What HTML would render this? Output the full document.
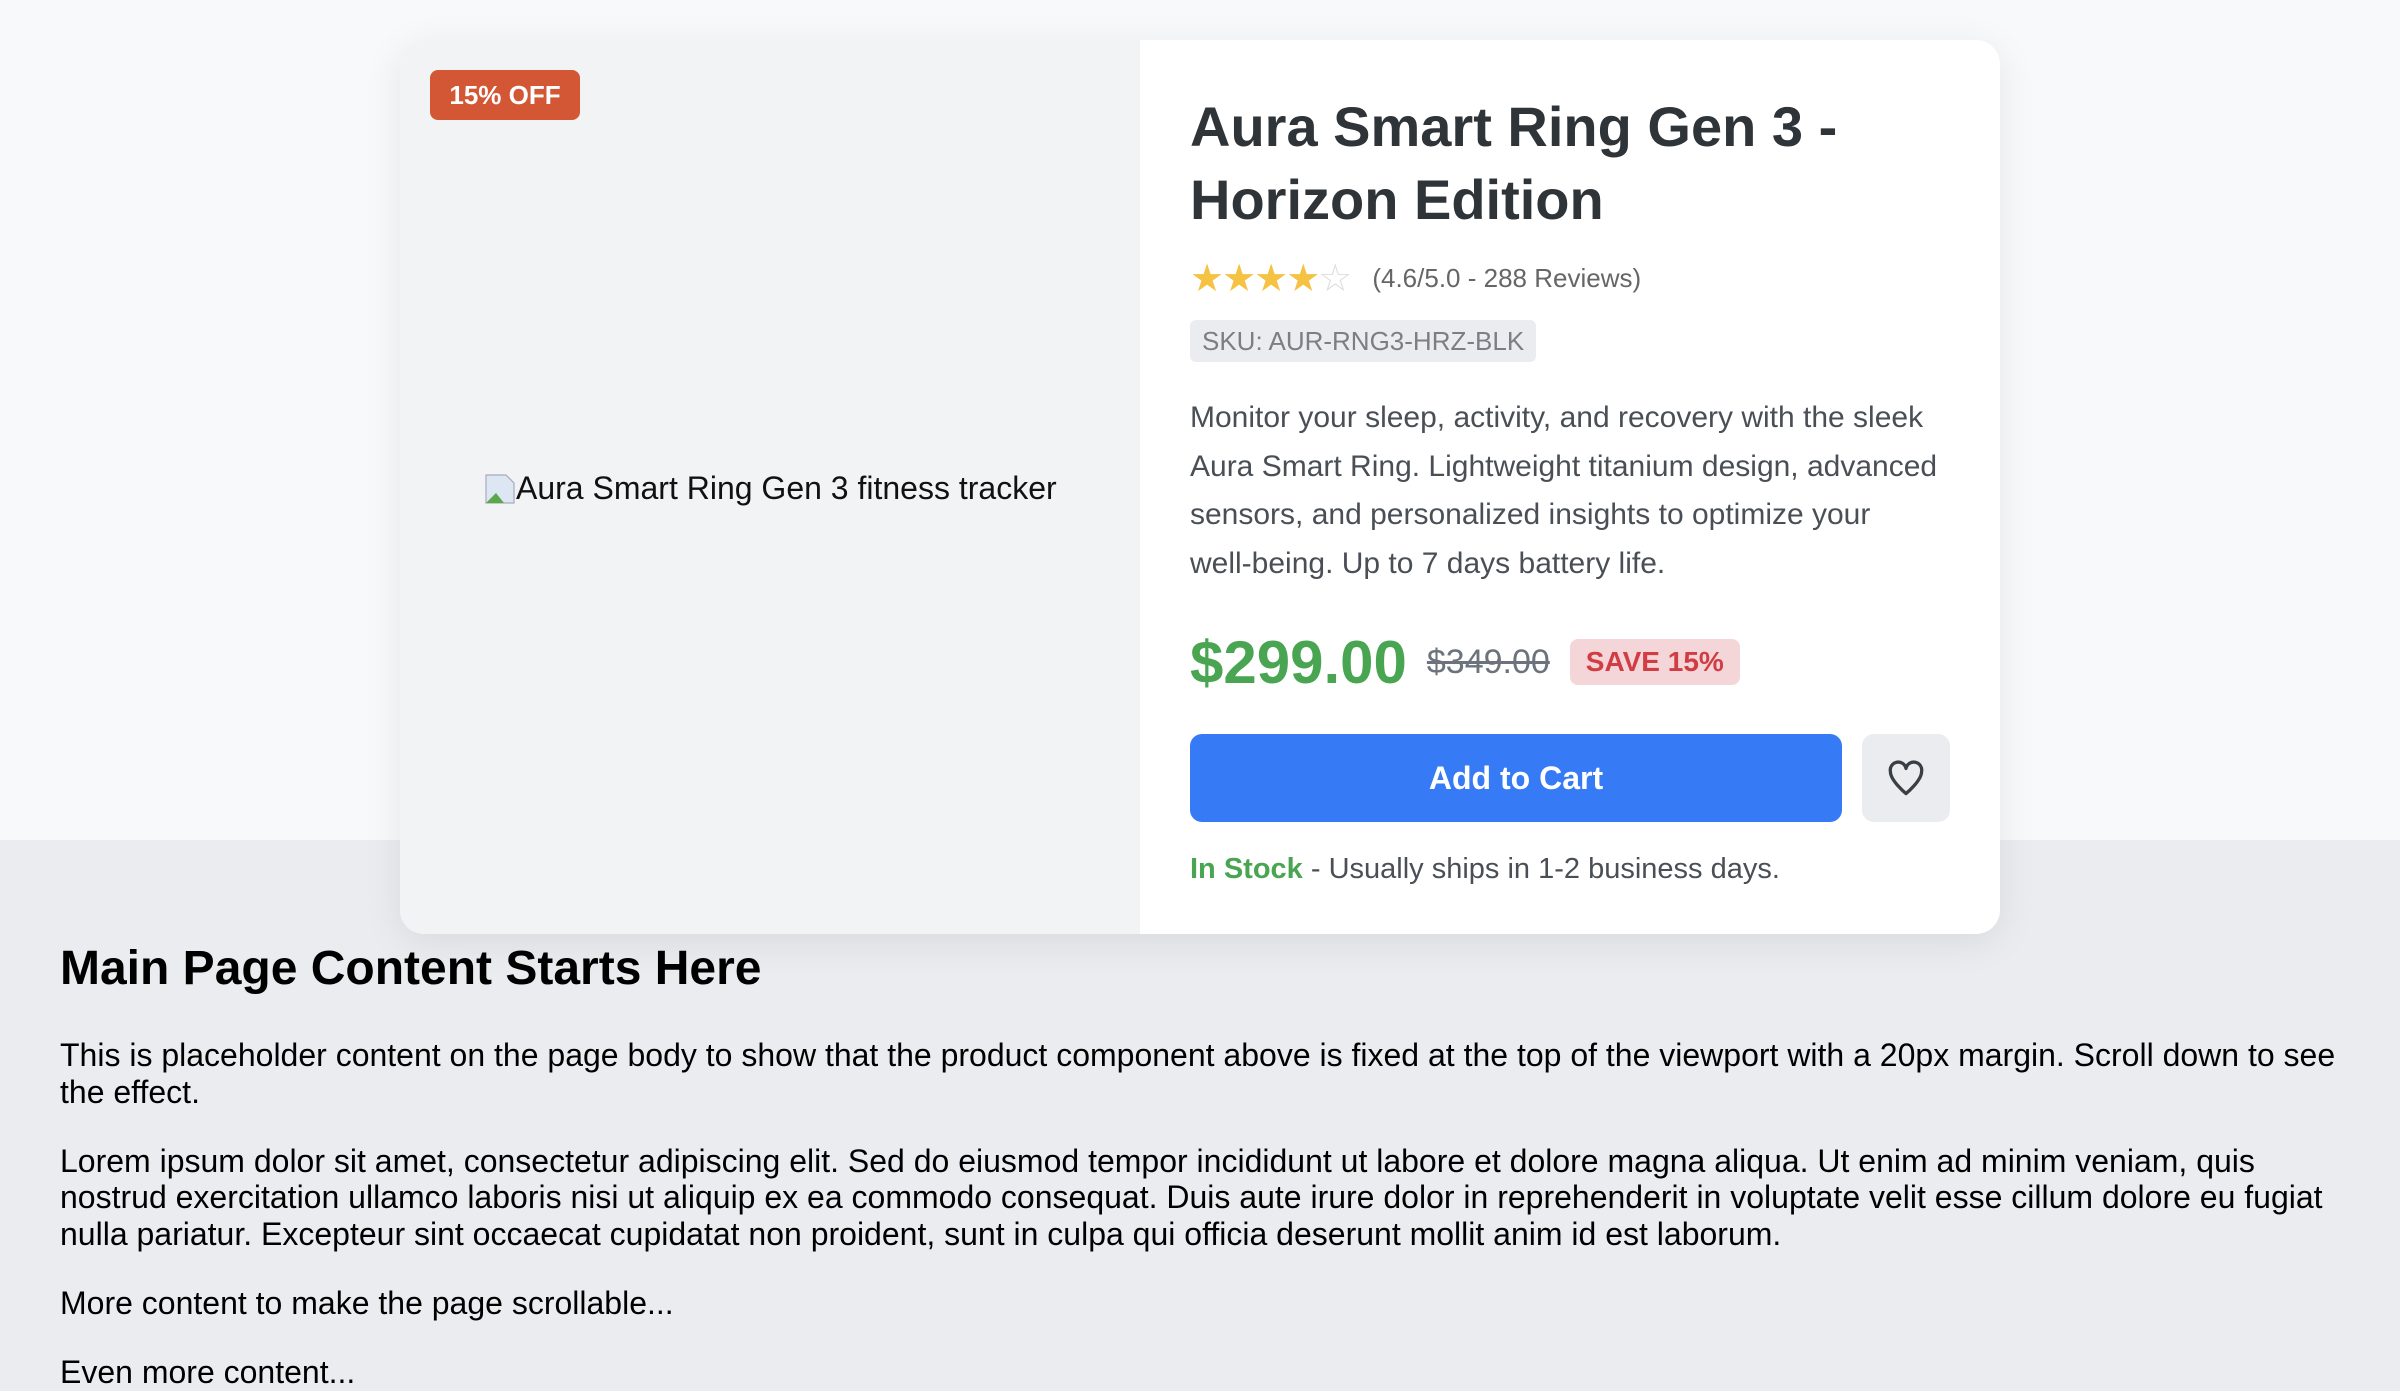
<!DOCTYPE html>
<html><head><meta charset="utf-8"><style>
html{zoom:2}
*{box-sizing:border-box}
body{margin:0;width:1200px;height:694px;overflow:hidden;font-family:"Liberation Sans",Arial,sans-serif;background:#ebecef;position:relative}
.top{position:absolute;left:0;top:0;width:1200px;height:420px;background:#f8f9fa}
.card{position:absolute;left:200px;top:20px;width:800px;height:447px;background:#fff;border-radius:12px;box-shadow:0 4px 20px rgba(0,0,0,.08);display:flex;overflow:hidden}
.img{width:370px;background:#f2f3f5;position:relative}
.badge{position:absolute;left:15px;top:15px;height:25px;width:75px;background:#d35735;color:#fff;font-weight:bold;font-size:13px;border-radius:4px;text-align:center;line-height:25px}
.alt{position:absolute;left:42px;top:215px;font-size:16px;color:#111;display:flex;align-items:center}
.info{flex:1;padding:25px 25px}
h1{margin:0;font-size:28px;line-height:36.5px;color:#2f3439;font-weight:bold}
.stars{margin-top:11px;font-size:13px;color:#666;display:flex;align-items:center;height:20px}
.stars span.s{color:#f6c244;font-size:19px;letter-spacing:-1px}
.stars span.e{color:#ddd;font-size:19px;margin-right:10px}
.sku{display:inline-block;margin-top:11px;background:#ebecef;color:#7a7f86;font-size:13px;padding:0 6px;height:21px;line-height:21px;border-radius:3px}
.desc{margin-top:16px;font-size:15px;line-height:24.3px;color:#4a4f56;width:380px}
.price{margin-top:19px;display:flex;align-items:center;height:36px}
.p1{font-size:30px;font-weight:bold;color:#4aa552}
.p2{font-size:17px;color:#6c737c;text-decoration:line-through;margin-left:10px}
.save{margin-left:10px;background:#f5d6d8;color:#d13d44;font-weight:bold;font-size:14px;padding:0 8px;height:23px;line-height:23px;border-radius:4px}
.btns{margin-top:18px;display:flex}
.cart{width:326px;height:44px;background:#367bf5;color:#fff;font-weight:bold;font-size:16px;border-radius:6px;text-align:center;line-height:44px}
.heart{width:44px;height:44px;margin-left:10px;background:#ebecef;border-radius:6px;display:flex;align-items:center;justify-content:center}
.stock{margin-top:15.5px;font-size:14.5px;color:#4a4f56}
.stock b{color:#4aa552}
.main{position:absolute;left:30px;top:470.5px;width:1150px}
.main h2{margin:0;font-size:24px;line-height:28px}
.main p{margin:0;font-size:16px;line-height:18.4px;color:#000}
</style></head><body>
<div class="top"></div>
<div class="card">
 <div class="img"><div class="badge">15% OFF</div>
 <div class="alt"><svg width="16" height="16" viewBox="0 0 16 16"><path d="M1 1h10l4 4v10H1z" fill="#dde6f3" stroke="#aab" stroke-width=".6"/><path d="M1 15l5-5 4 5z" fill="#5ba84a"/></svg>Aura Smart Ring Gen 3 fitness tracker</div></div>
 <div class="info">
  <h1>Aura Smart Ring Gen 3 - Horizon Edition</h1>
  <div class="stars"><span class="s">★★★★</span><span class="e">☆</span>(4.6/5.0 - 288 Reviews)</div>
  <div class="sku">SKU: AUR-RNG3-HRZ-BLK</div>
  <div class="desc">Monitor your sleep, activity, and recovery with the sleek Aura Smart Ring. Lightweight titanium design, advanced sensors, and personalized insights to optimize your well&#8209;being. Up to 7 days battery life.</div>
  <div class="price"><span class="p1">$299.00</span><span class="p2">$349.00</span><span class="save">SAVE 15%</span></div>
  <div class="btns"><div class="cart">Add to Cart</div><div class="heart"><svg width="22" height="22" viewBox="0 0 24 24" fill="none" stroke="#3a3f45" stroke-width="1.8" stroke-linejoin="round"><path d="M12 20.5C12 20.5 3.5 13.5 3.5 8.5A4.3 4.3 0 0 1 12 6.8 4.3 4.3 0 0 1 20.5 8.5C20.5 13.5 12 20.5 12 20.5z"/></svg></div></div>
  <div class="stock"><b>In Stock</b> - Usually ships in 1-2 business days.</div>
 </div>
</div>
<div class="main">
<h2>Main Page Content Starts Here</h2>
<p style="margin-top:20px">This is placeholder content on the page body to show that the product component above is fixed at the top of the viewport with a 20px margin. Scroll down to see the effect.</p>
<p style="margin-top:16px">Lorem ipsum dolor sit amet, consectetur adipiscing elit. Sed do eiusmod tempor incididunt ut labore et dolore magna aliqua. Ut enim ad minim veniam, quis nostrud exercitation ullamco laboris nisi ut aliquip ex ea commodo consequat. Duis aute irure dolor in reprehenderit in voluptate velit esse cillum dolore eu fugiat nulla pariatur. Excepteur sint occaecat cupidatat non proident, sunt in culpa qui officia deserunt mollit anim id est laborum.</p>
<p style="margin-top:16px">More content to make the page scrollable...</p>
<p style="margin-top:16px">Even more content...</p>
</div>
</body></html>
